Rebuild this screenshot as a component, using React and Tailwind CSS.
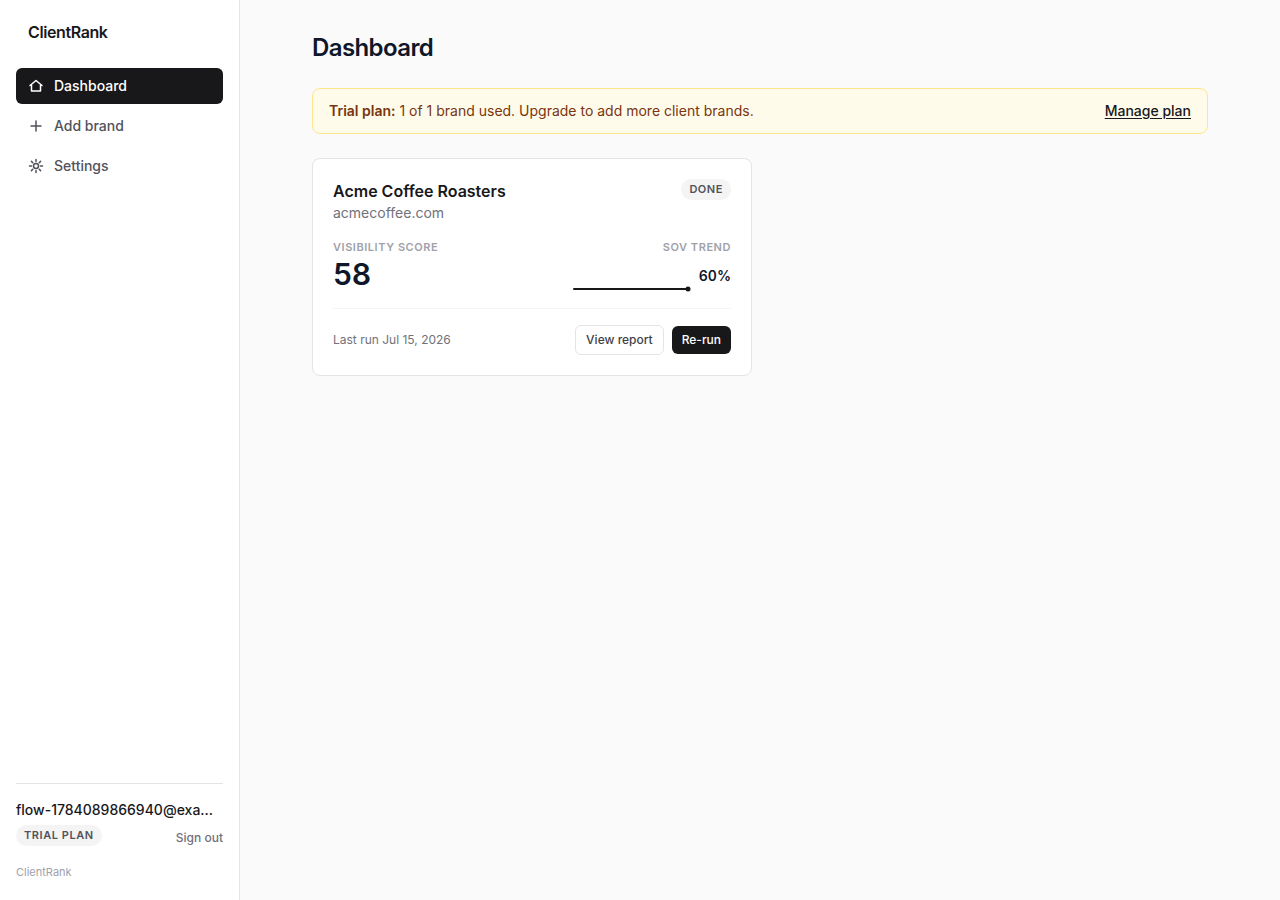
import React from 'react';

const NAV_ITEMS = [
    { label: 'Dashboard', icon: HomeIcon, href: '#dashboard', active: true },
    { label: 'Add brand', icon: PlusIcon, href: '#add-brand' },
    { label: 'Settings', icon: GearIcon, href: '#settings' },
];

const BRANDS = [
    {
        name: 'Acme Coffee Roasters',
        domain: 'acmecoffee.com',
        status: 'Done',
        score: 58,
        sov: 60,
        trend: [60, 60],
        lastRun: 'Jul 15, 2026',
    },
];

function Icon({ children }) {
    return (
        <svg
            className="w-4 h-4 shrink-0"
            viewBox="0 0 16 16"
            fill="none"
            stroke="currentColor"
            strokeWidth={1.5}
            strokeLinecap="round"
            strokeLinejoin="round"
            aria-hidden="true"
        >
            {children}
        </svg>
    );
}

function HomeIcon() {
    return (
        <Icon>
            <path d="M2 7.5 8 2.5l6 5M3.5 6.5V13h9V6.5" />
        </Icon>
    );
}

function PlusIcon() {
    return (
        <Icon>
            <path d="M8 3v10M3 8h10" />
        </Icon>
    );
}

function GearIcon() {
    return (
        <Icon>
            <circle cx="8" cy="8" r="2.5" />
            <path d="M8 1.5v2M8 12.5v2M14.5 8h-2M3.5 8h-2M12.6 3.4l-1.4 1.4M4.8 11.2l-1.4 1.4M12.6 12.6l-1.4-1.4M4.8 4.8 3.4 3.4" />
        </Icon>
    );
}

function Badge({ children }) {
    return (
        <span className="rounded-full bg-[#f4f4f5] px-2 py-0.5 text-[11px] leading-[17px] font-semibold uppercase tracking-wider text-[#52525b]">
            {children}
        </span>
    );
}

function Sparkline({ values, width = 120, height = 32 }) {
    const pad = 3;
    const min = Math.min(...values);
    const range = Math.max(...values) - min || 1;
    const points = values.map((v, i) => [
        pad + (i * (width - pad * 2)) / (values.length - 1),
        height - pad - ((v - min) / range) * (height - pad * 2),
    ]);
    const [lastX, lastY] = points[points.length - 1];

    return (
        <svg width={width} height={height} viewBox={`0 0 ${width} ${height}`} role="img" aria-label="SOV trend">
            <polyline
                points={points.map((p) => p.join(',')).join(' ')}
                fill="none"
                stroke="#18181b"
                strokeWidth={2}
                strokeLinecap="round"
                strokeLinejoin="round"
            />
            <circle cx={lastX} cy={lastY} r={2.5} fill="#18181b" />
        </svg>
    );
}

function Sidebar() {
    return (
        <aside className="sticky top-0 flex h-screen w-60 shrink-0 flex-col border-r border-[#e4e4e7] bg-white px-4 py-5">
            <div className="mb-6 px-3 text-base font-semibold tracking-tight text-[#18181b]">ClientRank</div>

            <nav className="flex flex-col gap-1">
                {NAV_ITEMS.map(({ label, icon: ItemIcon, href, active }) => (
                    <a
                        key={label}
                        href={href}
                        className={
                            active
                                ? 'flex items-center gap-2.5 rounded-md bg-[#18181b] px-3 py-2 text-sm font-medium text-white'
                                : 'flex items-center gap-2.5 rounded-md px-3 py-2 text-sm font-medium text-[#52525b] hover:bg-[#f4f4f5]'
                        }
                    >
                        <ItemIcon />
                        {label}
                    </a>
                ))}
            </nav>

            <div className="mt-auto border-t border-[#e4e4e7] pt-4">
                <p className="truncate text-sm font-medium text-[#18181b]">flow-1784089866940@example.com</p>
                <div className="mt-[5px] flex items-end justify-between">
                    <Badge>Trial plan</Badge>
                    <button type="button" className="text-xs font-medium text-[#71717a] hover:text-[#18181b]">
                        Sign out
                    </button>
                </div>
                <p className="mt-[18px] text-[11px] leading-4 text-[#a1a1aa]">ClientRank</p>
            </div>
        </aside>
    );
}

function BrandCard({ brand }) {
    return (
        <article className="rounded-lg border border-[#e4e4e7] bg-white p-5">
            <div className="flex items-start justify-between">
                <div>
                    <h2 className="text-base font-semibold text-[#18181b]">{brand.name}</h2>
                    <p className="text-sm text-[#71717a]">{brand.domain}</p>
                </div>
                <Badge>{brand.status}</Badge>
            </div>

            <div className="mt-4 flex justify-between">
                <div>
                    <p className="text-[11px] leading-[17px] font-semibold uppercase tracking-wider text-[#a1a1aa]">
                        Visibility score
                    </p>
                    <p className="text-3xl font-semibold tracking-tight tabular-nums text-[#0f172a]">{brand.score}</p>
                </div>
                <div className="flex flex-col items-end">
                    <p className="text-[11px] leading-[17px] font-semibold uppercase tracking-wider text-[#a1a1aa]">
                        SOV trend
                    </p>
                    <div className="mt-1 flex items-center gap-2">
                        <Sparkline values={brand.trend} />
                        <span className="text-sm font-semibold tabular-nums text-[#0f172a]">{brand.sov}%</span>
                    </div>
                </div>
            </div>

            <div className="mt-4 flex items-center justify-between border-t border-[#f4f4f5] pt-4">
                <p className="text-xs text-[#71717a]">Last run {brand.lastRun}</p>
                <div className="flex items-center gap-2">
                    <a
                        href="#report"
                        className="rounded-md border border-[#e4e4e7] bg-white px-2.5 py-1.5 text-xs font-medium text-[#3f3f46]"
                    >
                        View report
                    </a>
                    <button type="button" className="rounded-md bg-[#18181b] px-2.5 py-1.5 text-xs font-medium text-white">
                        Re-run
                    </button>
                </div>
            </div>
        </article>
    );
}

const App = () => {
    return (
        <div className="flex min-h-screen bg-[#fafafa] font-['Inter',sans-serif] antialiased">
            <Sidebar />
            <main className="min-w-0 flex-1">
                <div className="mx-auto max-w-[960px] px-8 py-8">
                    <h1 className="text-2xl font-semibold tracking-tight text-[#0f172a]">Dashboard</h1>

                    {/* Plan usage banner */}
                    <div className="mt-6 flex items-center justify-between gap-4 rounded-lg border border-[#fde68a] bg-[#fffbeb] px-4 py-3 text-sm text-[#78350f]">
                        <p>
                            <strong className="font-semibold">Trial plan:</strong> 1 of 1 brand used. Upgrade to add more
                            client brands.
                        </p>
                        <a href="#plan" className="shrink-0 font-medium text-[#18181b] underline underline-offset-2">
                            Manage plan
                        </a>
                    </div>

                    <div className="mt-6 grid gap-4 md:grid-cols-2">
                        {BRANDS.map((brand) => (
                            <BrandCard key={brand.domain} brand={brand} />
                        ))}
                    </div>
                </div>
            </main>
        </div>
    );
};

export default App;
